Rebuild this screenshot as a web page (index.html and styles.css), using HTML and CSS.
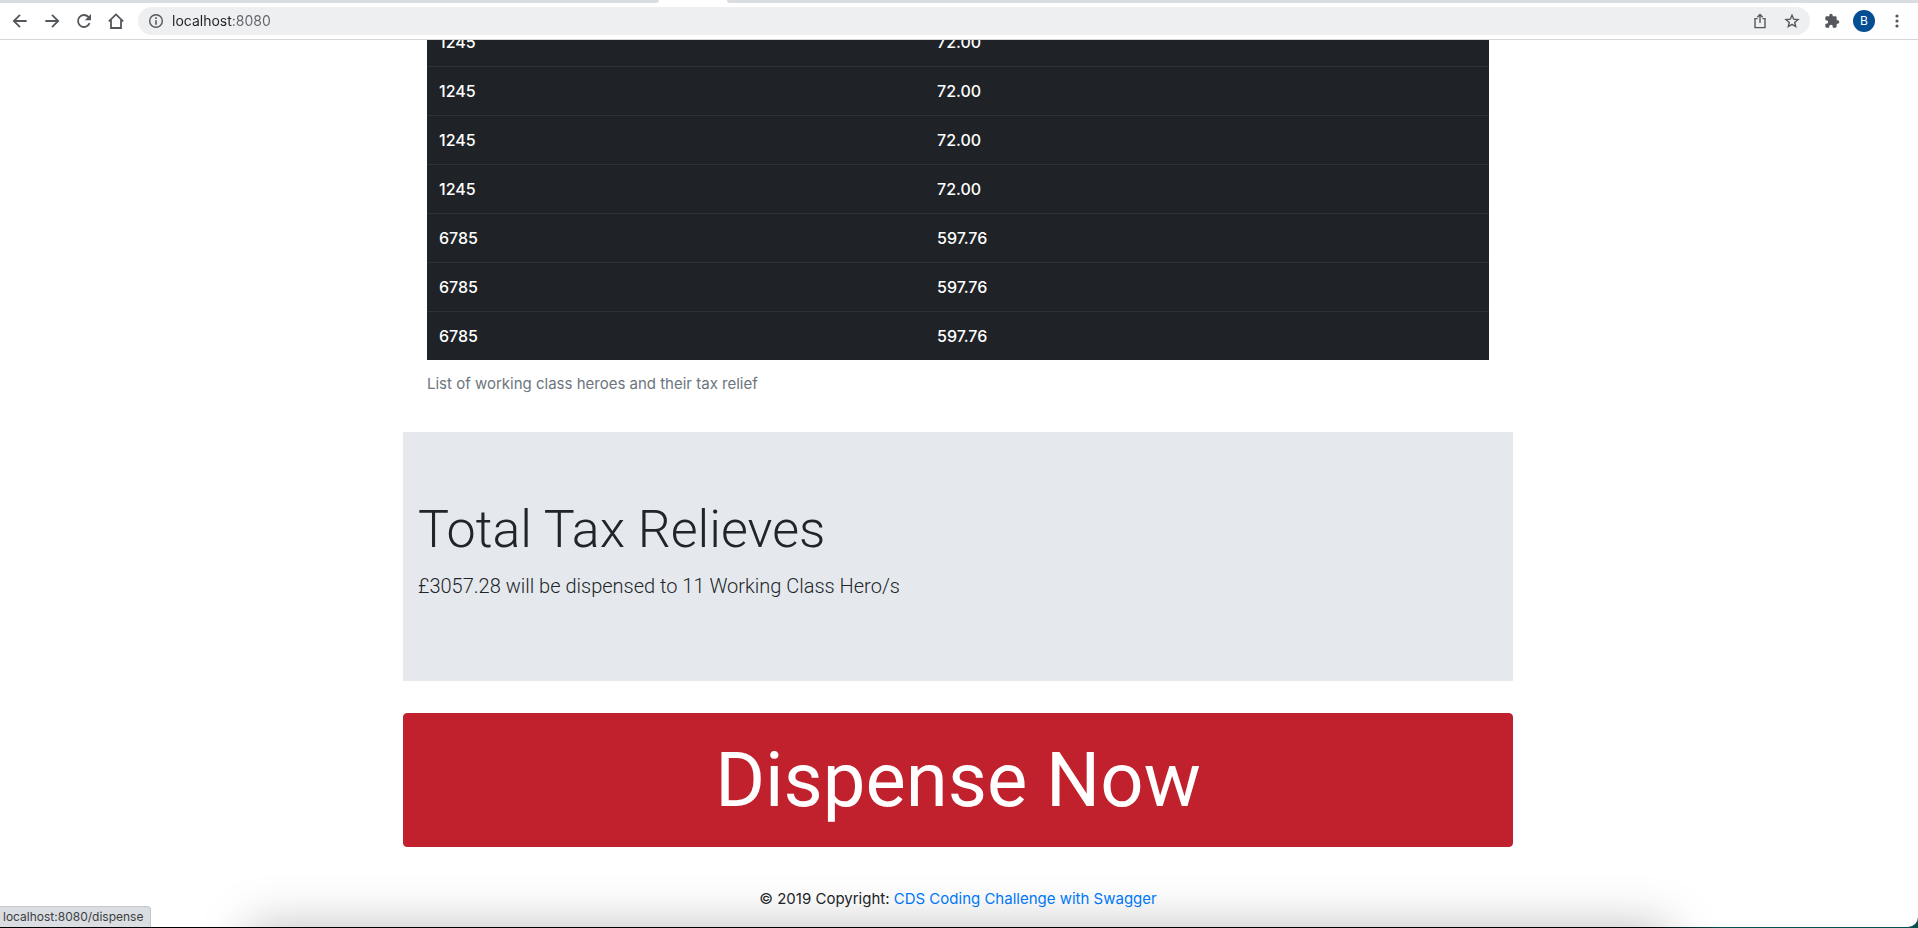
FILE: index.html
```html
<!DOCTYPE html>
<html lang="en">
<head>
<meta charset="utf-8">
<title>Working Class Heroes</title>
<link rel="stylesheet" href="styles.css">
</head>
<body>
<div class="window">
  <div class="tab-strip"><div class="tab-rest tab-rest-left"></div><div class="tab-active"></div><div class="tab-rest tab-rest-right"></div></div>
  <header class="toolbar">
    <nav class="nav-buttons" aria-label="Browser">
      <button class="icon-button" type="button" aria-label="Back"><svg width="20" height="20" viewBox="0 0 20 20"><path class="stroke" d="M16.700 10H4.200M10 3.800 3.800 10l6.200 6.200"/></svg></button>
      <button class="icon-button" type="button" aria-label="Forward"><svg width="20" height="20" viewBox="0 0 20 20"><path class="stroke" d="M3.300 10h12.500M10 3.800 16.200 10 10 16.200"/></svg></button>
      <button class="icon-button" type="button" aria-label="Reload"><svg width="20" height="20" viewBox="0 0 20 20"><path class="stroke" d="M15.600 12.200A6 6 0 1 1 14.400 5.900L15.500 7"/><path class="fill" d="M17 3v6.200h-6.200z"/></svg></button>
      <button class="icon-button" type="button" aria-label="Home"><svg width="20" height="20" viewBox="0 0 20 20"><path class="stroke" d="M5 9v8h10V9M2.800 10.400 10 3.400l7.200 7"/></svg></button>
    </nav>
    <div class="omnibox">
      <svg width="16" height="16" viewBox="0 0 16 16" aria-hidden="true"><circle class="stroke thin" cx="8" cy="8" r="6.300"/><path class="fill" d="M7.200 4.300h1.600v1.600H7.200zM7.200 7.200h1.600v4.600H7.200z"/></svg>
      <input class="address" type="text" value="localhost:8080" aria-label="Address">
      <button class="icon-button small" type="button" aria-label="Share"><svg width="16" height="16" viewBox="0 0 16 16"><path class="stroke thin" d="M5.500 5.600H3v9h10v-9h-2.500M8 10V1.600M5.300 4.200 8 1.500l2.700 2.700"/></svg></button>
      <button class="icon-button small" type="button" aria-label="Bookmark"><svg width="16" height="16" viewBox="0 0 16 16"><path class="stroke thin" d="m8 2.200 1.700 4 4.300.4-3.300 2.800 1 4.200L8 11.400l-3.700 2.200 1-4.200L2 6.600l4.300-.4z"/></svg></button>
    </div>
    <div class="tools">
      <button class="icon-button small" type="button" aria-label="Extensions"><svg width="16" height="16" viewBox="0 0 24 24"><path class="fill" d="M20.500 11H19V7c0-1.100-.9-2-2-2h-4V3.500a2.500 2.500 0 0 0-5 0V5H4c-1.100 0-2 .9-2 2v3.800h1.500a2.700 2.700 0 0 1 0 5.400H2V20c0 1.100.9 2 2 2h3.800v-1.500a2.700 2.700 0 0 1 5.400 0V22H17c1.100 0 2-.9 2-2v-4h1.500a2.500 2.500 0 0 0 0-5z"/></svg></button>
      <button class="avatar" type="button" aria-label="Profile">B</button>
      <button class="icon-button small" type="button" aria-label="Menu"><svg width="16" height="16" viewBox="0 0 16 16"><circle class="fill" cx="8" cy="3" r="1.600"/><circle class="fill" cx="8" cy="8" r="1.600"/><circle class="fill" cx="8" cy="13" r="1.600"/></svg></button>
    </div>
  </header>
  <main class="page">
    <div class="container">
      <div class="table-wrap">
        <table class="table">
          <caption>List of working class heroes and their tax relief</caption>
          <colgroup><col class="col-id"><col></colgroup>
          <tbody>
            <tr><th scope="row">1245</th><th>72.00</th></tr>
            <tr><th scope="row">1245</th><th>72.00</th></tr>
            <tr><th scope="row">1245</th><th>72.00</th></tr>
            <tr><th scope="row">1245</th><th>72.00</th></tr>
            <tr><th scope="row">6785</th><th>597.76</th></tr>
            <tr><th scope="row">6785</th><th>597.76</th></tr>
            <tr><th scope="row">6785</th><th>597.76</th></tr>
          </tbody>
        </table>
      </div>
      <section class="jumbotron">
        <h1 class="display">Total Tax Relieves</h1>
        <p class="lead">£3057.28 will be dispensed to 11 Working Class Hero/s</p>
      </section>
      <a class="dispense" href="/dispense">Dispense Now</a>
      <footer class="footer">© 2019 Copyright: <a href="#swagger">CDS Coding Challenge with Swagger</a></footer>
    </div>
    <div class="dock-shadow"></div>
    <div class="status">localhost:8080/dispense</div>
  </main>
</div>
</body>
</html>
```
FILE: styles.css
```css
* { box-sizing: border-box; }

body {
  margin: 0;
  padding-bottom: 1px;
  height: 100vh;
  overflow: hidden;
  background: linear-gradient(90deg, #000 86%, #07504f 90%);
  color: #212529;
  font-family: Inter, "Liberation Sans", sans-serif;
  font-size: 15px;
  line-height: 24px;
}

.window {
  display: flex;
  flex-direction: column;
  height: 100%;
  overflow: hidden;
  background: #fff;
  border-radius: 0 0 10px 0;
}

.tab-strip { display: flex; flex: none; height: 3px; }
.tab-active { width: 68px; }
.tab-rest { background: #d9dce1; }
.tab-rest-left { width: 659px; border-bottom-right-radius: 4px; }
.tab-rest-right { flex: 1; border-bottom-left-radius: 4px; }

.toolbar {
  display: flex;
  align-items: center;
  flex: none;
  height: 37px;
  padding: 0 13px 1px 10px;
  border-bottom: 1px solid #d5d6d8;
}

.nav-buttons { display: flex; gap: 12px; margin-right: 12px; }

.icon-button {
  display: flex;
  width: 20px;
  height: 20px;
  padding: 0;
  border: 0;
  background: none;
}
.icon-button.small { width: 16px; height: 16px; }

.stroke { fill: none; stroke: #54585d; stroke-width: 1.8; }
.stroke.thin { stroke-width: 1.4; }
.fill { fill: #54585d; }

.omnibox {
  display: flex;
  align-items: center;
  flex: 1;
  gap: 16px;
  height: 28px;
  padding: 0 10px;
  border-radius: 14px;
  background: #eeeff1;
}

.address {
  flex: 1;
  min-width: 0;
  margin-left: -8px;
  padding: 0;
  border: 0;
  font: 14px/20px Inter, sans-serif;
  color: transparent;
  background: linear-gradient(90deg, #202124 61px, #5f6368 61px);
  -webkit-background-clip: text;
  background-clip: text;
}

.tools { display: flex; align-items: center; gap: 14px; margin-left: 14px; }

.avatar {
  width: 22px;
  height: 22px;
  margin-left: -1px;
  padding: 0;
  border: 0;
  border-radius: 50%;
  background: #054e93;
  color: #fff;
  font: 12px/22px Inter, sans-serif;
}

.page {
  position: relative;
  flex: 1;
  min-height: 0;
  overflow: hidden;
  padding-right: 2px;
}

.container { max-width: 1110px; margin: 0 auto; }

/* The table is scrolled part of a row under the toolbar. */
.table-wrap { margin-top: -23px; padding: 0 24px; }

.table {
  width: 100%;
  margin-bottom: 36px;
  border-spacing: 0;
  table-layout: fixed;
}
.table caption {
  caption-side: bottom;
  padding-top: 12px;
  color: #6c757d;
  text-align: left;
}
.col-id { width: 498px; }
.table tbody { background: #1f2327; color: #fff; }
.table th {
  height: 49px;
  padding: 12px;
  border-top: 1px solid #2e3236;
  font-size: 16px;
  font-weight: 500;
  text-align: left;
}

.jumbotron {
  margin-bottom: 32px;
  padding: 64px 15px;
  background: #e5e9ed;
}
.display {
  margin: 0 0 8px;
  font-family: Roboto, sans-serif;
  font-size: 52px;
  font-weight: 300;
  line-height: 67px;
}
.lead {
  margin: 0 0 16px;
  font-family: Roboto, sans-serif;
  font-size: 20px;
  font-weight: 300;
  line-height: 30px;
}

.dispense {
  display: block;
  padding: 6px 12px;
  border: 1px solid #bd2130;
  border-radius: 4px;
  background: #c0212d;
  color: #fff;
  font-family: Roboto, sans-serif;
  font-size: 76px;
  line-height: 120px;
  text-align: center;
  text-decoration: none;
}

.footer { padding: 40px 0 16px; text-align: center; }
.footer a { color: #007bff; text-decoration: none; }

.dock-shadow {
  position: absolute;
  top: 100%;
  left: 13%;
  right: 13%;
  height: 60px;
  box-shadow: 0 0 50px rgba(0, 0, 0, 0.26);
}

.status {
  position: absolute;
  left: 0;
  bottom: 0;
  height: 21px;
  padding: 0 7px 0 3px;
  border: solid #c3c6ca;
  border-width: 1px 1px 0 0;
  border-top-right-radius: 4px;
  background: #dadde1;
  color: #3c4043;
  font-size: 12px;
  line-height: 20px;
}
```
